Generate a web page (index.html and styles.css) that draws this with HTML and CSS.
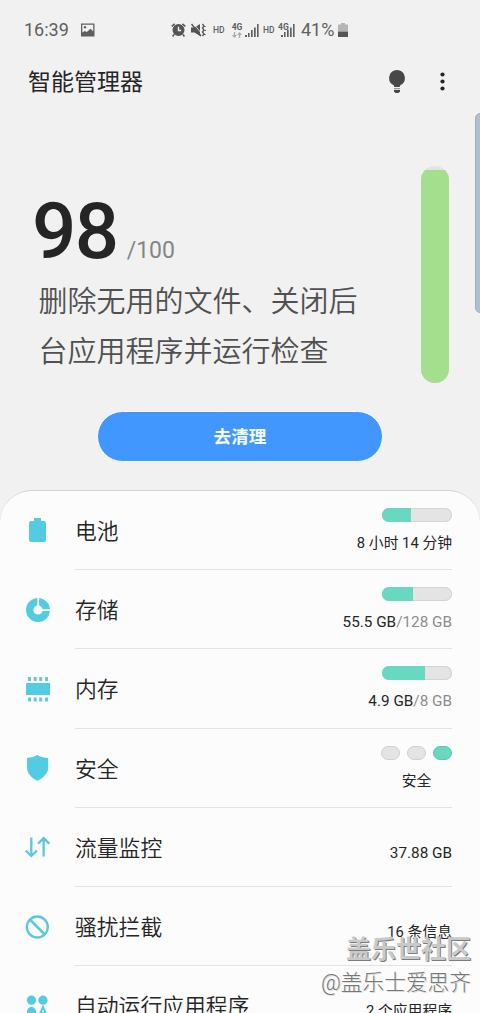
FILE: index.html
```html
<!DOCTYPE html>
<html lang="zh-CN">
<head>
<meta charset="utf-8">
<title>智能管理器</title>
<link rel="stylesheet" href="styles.css">
</head>
<body>
<div class="screen">
  <div class="status">
    <span class="time">16:39</span>
    <svg class="s-pic" width="14" height="14" viewBox="0 0 14 14"><path fill="#606060" fill-rule="evenodd" d="M0 0.5h13.500v13H0zM1.300 1.800V9.500l2.500-1.500 2 1 3.700-3.200 2.700 2.400V1.800z"/><circle cx="4" cy="4.200" r="1.200" fill="#606060"/></svg>
    <svg class="s-alarm" width="15" height="14" viewBox="0 0 15 14"><circle cx="7.500" cy="7" r="6" fill="#555"/><path d="M7.500 3.800v3.700h2.600" stroke="#f1f1f1" stroke-width="1.400" fill="none"/><path d="M.7 3.400 3.600.9M14.300 3.400 11.400.9M3 11.500l-1.400 2M12 11.500l1.400 2" stroke="#555" stroke-width="1.500"/></svg>
    <svg class="s-mute" width="15" height="14" viewBox="0 0 15 14"><path d="M0 4.500h3.500L9 1v12L3.500 9.500H0z" fill="#555"/><path d="M2 0l9 11" stroke="#f1f1f1" stroke-width=".8"/><path d="M.5 1l9.500 12" stroke="#555" stroke-width="1.500"/><path d="M11.500 1l1.500 2-1.500 2 1.500 2-1.500 2 1.500 2-1.500 2M14 3v1M14.300 7v1M14 11v1" stroke="#555" stroke-width="1.300" fill="none"/></svg>
    <span class="hd hd-a">HD</span>
    <span class="net"><span class="gen">4G</span><svg width="10" height="6" viewBox="0 0 10 6"><path d="M2.500 0v4.500M7.500 6V1.500" stroke="#aaa" stroke-width="1.400"/><path d="M0 3h5L2.500 6zM5 3h5L7.500 0z" fill="#aaa"/></svg></span>
    <svg class="s-sig" width="14" height="13" viewBox="0 0 14 13"><path fill="#606060" d="M0 11h2v2H0zM3 9h1.600v4H3zM6 6h1.700v7H6zM9 3.500h1.700V13H9zM12 0h1.600v13H12z"/></svg>
    <span class="hd hd-b">HD</span>
    <span class="net-b"><span class="gen">4G</span><svg class="sig-b" width="14" height="13" viewBox="0 0 14 13"><path fill="#606060" d="M0 11h2v2H0zM3 8h1.600v5H3zM6 6h1.700v7H6zM9 3.500h1.700V13H9zM12 0h1.600v13H12z"/></svg></span>
    <span class="pct">41%</span>
    <svg class="s-bat" width="10" height="14" viewBox="0 0 10 14"><path d="M3 0h4v1.500h3V9H0V1.500h3z" fill="#b5b5b5"/><path d="M0 8.700h10V14H0z" fill="#555"/></svg>
  </div>
  <header class="appbar">
    <h1 class="title">智能管理器</h1>
    <svg class="bulb" width="16" height="23" viewBox="0 0 16 23"><path d="M8 0a8 8 0 0 1 3.300 15.200L10.700 17H5.300l-.6-1.800A8 8 0 0 1 8 0z" fill="#484848"/><path d="M5 18h6v1.300H5z" fill="#999"/><path d="M5 20h6v1.500L9.500 23h-3L5 21.500z" fill="#484848"/></svg>
    <svg class="more" width="5" height="19" viewBox="0 0 5 19"><g fill="#252525"><circle cx="2.500" cy="2.500" r="2.100"/><circle cx="2.500" cy="9.500" r="2.100"/><circle cx="2.500" cy="16.500" r="2.100"/></g></svg>
  </header>
  <section class="hero">
    <div class="summary">
      <div class="score"><span class="num">98</span><span class="max">/100</span></div>
      <p class="message">删除无用的文件、关闭后<br>台应用程序并运行检查</p>
    </div>
    <div class="gauge"><div class="gauge-fill"></div></div>
  </section>
  <button class="clean">去清理</button>
  <div class="edge-handle"></div>
  <main class="sheet">
    <div class="row">
      <svg class="icon" width="26" height="26" viewBox="0 0 26 26"><path d="M10 0h7v3h3q2 0 2 2v17q0 2-2 2H7q-2 0-2-2V5q0-2 2-2h3z" fill="#53cce1"/></svg>
      <div class="content"><span class="label">电池</span><div class="info"><div class="bar"><i style="width:41%"></i></div><span class="value">8 小时 14 分钟</span></div></div>
    </div>
    <div class="row">
      <svg class="icon" width="26" height="26" viewBox="0 0 26 26"><circle cx="14" cy="13" r="8.300" fill="none" stroke="#53cce1" stroke-width="7.400"/><path d="M14.200 0v9M18 13.200h8" stroke="#fcfcfc" stroke-width="1.700"/></svg>
      <div class="content"><span class="label">存储</span><div class="info"><div class="bar"><i style="width:44%"></i></div><span class="value size">55.5 GB<em>/128 GB</em></span></div></div>
    </div>
    <div class="row">
      <svg class="icon" width="26" height="26" viewBox="0 0 26 26"><path d="M2 7h24v12H2z" fill="#53cce1"/><path d="M4 1h3v4H4zM9.700 1h3v4h-3zM15.200 1h3v4h-3zM21 1h3v4h-3zM4 21.500h3v4H4zM9.700 21.500h3v4h-3zM15.200 21.500h3v4h-3zM21 21.500h3v4h-3z" fill="#6fc6d3"/></svg>
      <div class="content"><span class="label">内存</span><div class="info"><div class="bar"><i style="width:61.5%"></i></div><span class="value size">4.9 GB<em>/8 GB</em></span></div></div>
    </div>
    <div class="row">
      <svg class="icon" width="26" height="26" viewBox="0 0 26 26"><path d="M13.500 0q4 2.700 10.700 3v9.500c0 6-5 10.500-10.700 13.300C7.800 23 3 18.500 3 12.500V3q6.500-.3 10.500-3z" fill="#53cce1"/></svg>
      <div class="content"><span class="label">安全</span><div class="info center"><div class="levels"><b></b><b></b><b class="on"></b></div><span class="value">安全</span></div></div>
    </div>
    <div class="row">
      <svg class="icon" width="26" height="26" viewBox="0 0 26 26"><path d="M7.300 3.500v18M1.600 16.500l5.700 5.500L13 16.500M19.600 22.500V4.500M14 9.800 19.600 4.100l5.700 5.700" fill="none" stroke="#5bc8da" stroke-width="2.300"/></svg>
      <div class="content"><span class="label">流量监控</span><div class="info plain"><span class="value size">37.88 GB</span></div></div>
    </div>
    <div class="row">
      <svg class="icon" width="26" height="26" viewBox="0 0 26 26"><circle cx="13.300" cy="13" r="10.500" fill="none" stroke="#5bc8da" stroke-width="2.300"/><path d="M5.800 5.500l15 15" stroke="#5bc8da" stroke-width="2.500"/></svg>
      <div class="content"><span class="label">骚扰拦截</span><div class="info plain"><span class="value">16 条信息</span></div></div>
    </div>
    <div class="row">
      <svg class="icon" width="26" height="26" viewBox="0 0 26 26"><g fill="#53cce1"><circle cx="7.500" cy="7.200" r="4.600"/><circle cx="19" cy="7.200" r="4.600"/><circle cx="7.500" cy="18.700" r="4.600"/></g><path d="M15 23l4-9 4 9M16.500 20h5" fill="none" stroke="#53cce1" stroke-width="2"/></svg>
      <div class="content"><span class="label">自动运行应用程序</span><div class="info plain"><span class="value">2 个应用程序</span></div></div>
    </div>
  </main>
  <div class="watermark"><span class="community">盖乐世社区</span><span class="author">@盖乐士爱思齐</span></div>
</div>
</body>
</html>
```
FILE: styles.css
```css
* { box-sizing: border-box; }
body { margin: 0; font-family: Roboto, "Noto Sans CJK SC", sans-serif; color: #252525; background: #f1f1f1; }
.screen { position: relative; width: 480px; height: 1013px; overflow: hidden; background: #f1f1f1; }

.status { display: flex; align-items: center; height: 60px; padding-left: 24px; color: #606060; white-space: nowrap; }
.status svg { flex: none; }
.time { width: 57px; font-size: 18px; padding-bottom: 1px; }
.s-alarm { margin-left: 76px; }
.s-mute { margin-left: 5px; }
.hd { width: 12px; font-size: 8.5px; font-weight: 500; padding-bottom: 1px; }
.hd-a { margin-left: 7px; }
.net { display: flex; flex-direction: column; width: 12px; margin-left: 6px; align-items: center; gap: 1px; }
.gen { font-size: 8.5px; line-height: 8px; font-weight: 700; }
.s-sig { margin-left: 2px; }
.hd-b { margin-left: 4px; }
.net-b { position: relative; width: 17px; height: 15px; margin-left: 3px; display: flex; }
.sig-b { position: absolute; left: 3px; top: 1px; }
.pct { margin-left: 6px; width: 37px; font-size: 18px; padding-bottom: 1px; }

.appbar { display: flex; align-items: center; height: 42px; padding: 0 35px 0 28px; }
.title { flex: 1; margin: 0; padding-top: 4px; font-size: 23px; line-height: 34px; font-weight: 400; }
.more { margin-left: 35px; }

.hero { display: flex; justify-content: space-between; height: 309px; padding: 64px 31px 0 32px; }
.score { display: flex; align-items: baseline; height: 112px; line-height: 132px; }
.num { font-size: 78px; font-weight: 500; letter-spacing: -1.500px; }
.max { margin-left: 9px; font-size: 23px; color: #858585; }
.message { margin: 0 0 0 6.500px; font-size: 29px; line-height: 49.500px; font-weight: 350; color: #505050; white-space: nowrap; }
.gauge { width: 28px; height: 217px; border-radius: 14px; background: #e3e3e3; overflow: hidden; display: flex; align-items: flex-end; }
.gauge-fill { width: 100%; height: 98%; background: #a3df8c; }

.clean { display: block; margin: 0 auto; width: 286px; height: 51px; padding: 2px 0 0; border: 1px solid #fafdff; border-radius: 26px; background: #4297ff; color: #f4fcff; font: 700 17.600px/47px Roboto, "Noto Sans CJK SC", sans-serif; }
.edge-handle { position: absolute; right: -6px; top: 113px; width: 11px; height: 200px; border-radius: 5px; border: 1px solid #a4b1bc; background: #adbfd1; }

.sheet { margin-top: 28px; height: 620px; border-top: 1px solid #d2d2d2; border-radius: 32px 32px 0 0; background: #fcfcfc; }
.row { display: flex; align-items: center; height: 79.200px; padding: 0 28px 0 24px; }
.icon { flex: none; margin-right: 25px; }
.content { display: flex; flex: 1; justify-content: space-between; align-items: center; height: 100%; border-bottom: 1px solid #e3e3e3; white-space: nowrap; }
.label { padding-top: 4px; font-size: 21.800px; line-height: 32px; font-weight: 350; }
.info { display: flex; flex-direction: column; align-items: flex-end; align-self: flex-start; padding-top: 17px; }
.info.center { align-items: center; }
.info.plain { padding-top: 34px; }
.value { padding-top: 1px; font-size: 14.800px; line-height: 20px; font-weight: 400; }
.value.size { font-size: 15.300px; }
.value em { font-style: normal; color: #8c8c8c; }
.bar { width: 70px; height: 14px; margin-bottom: 10px; border-radius: 7px; background: #e4e4e4; box-shadow: inset 0 0 0 1px #d4d4d4; overflow: hidden; }
.bar i { display: block; height: 100%; background: #69d8c1; }
.levels { display: flex; gap: 7px; margin-bottom: 10px; }
.levels b { width: 19px; height: 14px; border: 1px solid #d0d0d0; border-radius: 7px; background: #e4e4e4; }
.levels .on { background: #69d8c1; border-color: #62c5b1; }

.watermark { position: absolute; right: 9px; bottom: 14px; display: flex; flex-direction: column; align-items: flex-end; white-space: nowrap; }
.community { font-size: 25px; line-height: 34px; font-weight: 700; color: #c9c9c9; text-shadow: 1px 1px 0 #7c7c7c; }
.author { font-size: 21.700px; line-height: 32px; font-weight: 300; color: #777; text-shadow: 1px 1px 0 #ddd; }
```
